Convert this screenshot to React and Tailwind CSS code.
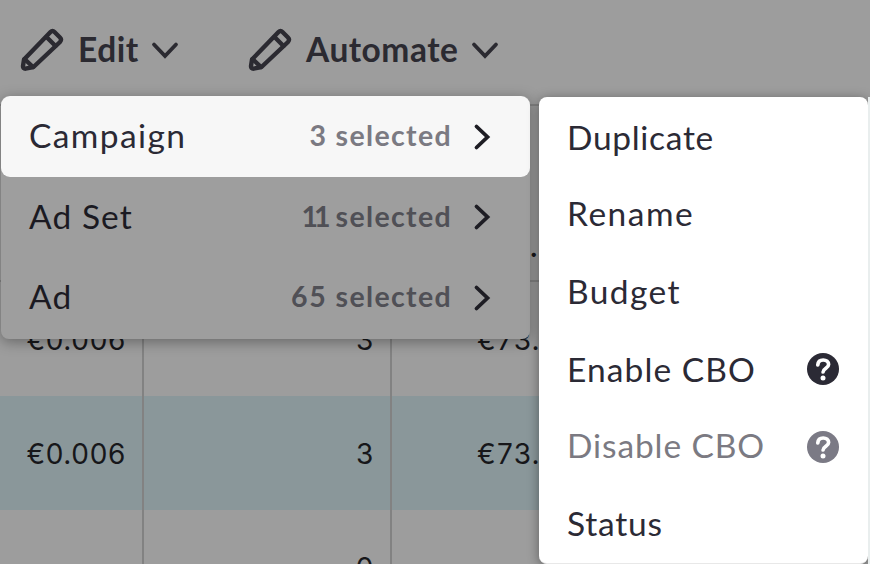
const LABEL = "font-['Lato','Liberation_Sans',sans-serif] whitespace-nowrap";

function Pencil() {
  return (
    <svg className="mt-0.5 h-11 w-11 shrink-0" viewBox="0 0 44 44" fill="none" stroke="#2b2a31" strokeWidth="4.400" strokeLinejoin="round" strokeLinecap="round">
      <path d="M4 31.500 30.500 4Q32.500 2 34.500 4L40 9.500Q42 11.500 40 14L13.500 39L5.500 40.700Q2.800 40.700 3 38Z" />
      <path d="M26.500 9 35.500 18M4.500 31 13 39" />
    </svg>
  );
}

function ChevronDown() {
  return (
    <svg className="mt-0.5 h-[18px] w-7 shrink-0" viewBox="0 0 28 18" fill="none" stroke="#2b2a31" strokeWidth="3.800" strokeLinecap="round">
      <path d="M3 3.500 14 15 25 3.500" />
    </svg>
  );
}

function ChevronRight() {
  return (
    <svg className="h-7 w-[18px] shrink-0" viewBox="0 0 18 28" fill="none" stroke="#1e1d24" strokeWidth="3.800" strokeLinecap="round">
      <path d="M3.500 3.500 14.500 14 3.500 24.500" />
    </svg>
  );
}

function Help({ color }) {
  return (
    <svg className="h-8 w-8 shrink-0" viewBox="0 0 32 32" fill="none">
      <circle cx="16" cy="16" r="16" fill={color} />
      <path d="M10.800 11.800C11.100 8.600 13.200 7 16.200 7C19.300 7 21.600 8.800 21.600 11.600C21.600 15.300 16.300 15.300 16.100 19" stroke="#fff" strokeWidth="3.700" strokeLinecap="round" />
      <circle cx="16" cy="24.900" r="2.500" fill="#fff" />
    </svg>
  );
}

function MenuRow({ label, tracking, count, countTracking, countColor, className }) {
  return (
    <div className={`flex items-center pl-7 pr-[39px] ${className}`}>
      <span className={`${LABEL} ${tracking} pb-[3px] text-[33.500px] leading-10`}>{label}</span>
      <span className={`${LABEL} ${countColor} ml-auto mr-[21px] flex gap-2 pb-[3px] text-[28.500px] font-bold leading-10`}>
        <span className={countTracking}>{count}</span>
        <span className="tracking-[1.350px]">selected</span>
      </span>
      <ChevronRight />
    </div>
  );
}

function SubItem({ label, tracking, color = "text-[#2b2a35]", help, helpOffset = "", className }) {
  return (
    <div className={`flex shrink-0 items-center pl-7 pr-[29px] ${className}`}>
      <span className={`${LABEL} ${tracking} ${color} pb-0.5 text-[33.500px] leading-10`}>{label}</span>
      {help && <span className={`ml-auto ${helpOffset}`}><Help color={help} /></span>}
    </div>
  );
}

function DataRow({ cells, className = "" }) {
  return (
    <div className={`flex h-[114px] shrink-0 text-[28px] leading-10 tracking-[0.650px] ${className}`}>
      <div className="flex w-36 shrink-0 items-center justify-end border-r-2 border-[#828282] pr-4 pt-0.5">{cells[0]}</div>
      <div className="flex w-[248px] shrink-0 items-center justify-end border-r-2 border-[#828282] pr-4 pt-0.5">{cells[1]}</div>
      <div className="flex flex-1 items-center pl-[85px] pt-0.5 tracking-[1.300px]">{cells[2]}</div>
    </div>
  );
}

export default function App() {
  return (
    <div className="relative flex h-[564px] w-[870px] flex-col overflow-hidden bg-[#9d9d9d] text-[#17171a]">
      <header className="flex h-[104px] shrink-0 items-start pl-5 pt-[26px] text-[#2b2a31]">
        <div className="flex w-[228px] items-center">
          <Pencil />
          <span className={`${LABEL} ml-3.5 w-[73px] text-[33.500px] font-bold leading-[42px] tracking-[0.500px]`}>Edit</span>
          <ChevronDown />
        </div>
        <div className="flex items-center">
          <Pencil />
          <span className={`${LABEL} ml-3.5 w-[165px] text-[33.500px] font-bold leading-[42px] tracking-[0.500px]`}>Automate</span>
          <ChevronDown />
        </div>
      </header>

      <main className="flex flex-1 flex-col border-t-2 border-[#858585] font-['Inter','Liberation_Sans',sans-serif]">
        <div className="flex h-[176px] shrink-0 items-end border-b-2 border-[#858585] pb-[15px] pl-[529px] text-[33px] leading-10">.</div>
        <DataRow cells={["€0.006", "3", "€73."]} />
        <DataRow cells={["€0.006", "3", "€73."]} className="bg-[#8a979a]" />
        <DataRow cells={["", "0", ""]} />
      </main>

      <div className="absolute left-px top-24 flex h-[243px] w-[529px] flex-col rounded-lg bg-[#9e9e9e] shadow-[0_3px_14px_rgba(0,0,0,0.35)]">
        <MenuRow label="Campaign" tracking="tracking-[1.400px]" count="3" countTracking="tracking-[1.500px]" countColor="text-[#7b7a82]" className="h-[81px] rounded-[9px] bg-[#f7f7f7] text-[#2b2a35]" />
        <MenuRow label="Ad Set" tracking="tracking-[1.100px]" count="11" countTracking="tracking-[-4px] pr-px" countColor="text-[#505056]" className="h-20 text-[#1b1a22]" />
        <MenuRow label="Ad" tracking="tracking-[1.300px]" count="65" countTracking="tracking-[1.700px]" countColor="text-[#505056]" className="h-20 pt-px text-[#1b1a22]" />
      </div>

      <div className="absolute left-[539px] top-[97px] flex h-[467px] w-[329px] flex-col rounded-lg border-b border-[#e8e8e8] bg-white shadow-[0_2px_12px_rgba(0,0,0,0.4)]">
        <SubItem label="Duplicate" tracking="tracking-[0.700px]" className="h-[82px]" />
        <SubItem label="Rename" tracking="tracking-[1.500px]" className="h-[70px]" />
        <SubItem label="Budget" tracking="tracking-[1.400px]" className="h-[86px]" />
        <SubItem label="Enable CBO" tracking="tracking-[1.100px]" help="#2b2a35" helpOffset="pb-0.5" className="h-[69px]" />
        <SubItem label="Disable CBO" tracking="tracking-[0.900px]" color="text-[#7b7a82]" help="#7b7a85" helpOffset="pt-0.5" className="h-[84px]" />
        <SubItem label="Status" tracking="tracking-[0.800px]" className="h-[71px]" />
      </div>
      <div className="absolute right-0 top-[97px] h-[467px] w-0.5 bg-[#e9eeee]" />
    </div>
  );
}
